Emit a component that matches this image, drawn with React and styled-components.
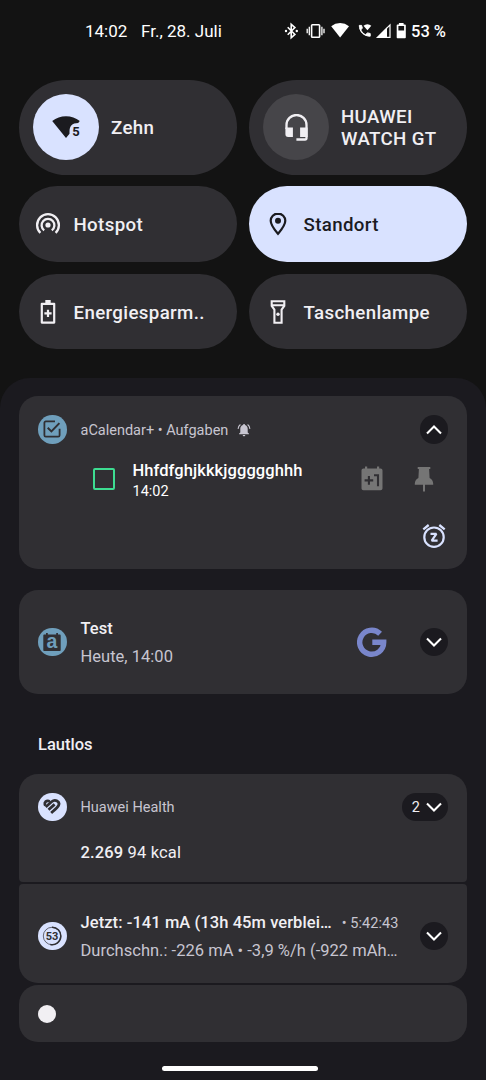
import React from "react";
import styled, { createGlobalStyle } from "styled-components";

const App = () => {
  return (
    <>
      <GlobalStyle />
      <Screen>
        <StatusBar>
          <StatusText $width={56}>14:02</StatusText>
          <StatusText $width={143}>Fr., 28. Juli</StatusText>
          <StatusIcons />
          <BatteryText>53 %</BatteryText>
        </StatusBar>

        <QuickSettings>
          <Tile $large>
            <TileCircle $active>
              <WifiFiveIcon />
            </TileCircle>
            <TileLabel>Zehn</TileLabel>
          </Tile>
          <Tile $large>
            <TileCircle>
              <HeadsetIcon />
            </TileCircle>
            <TileLabel>
              HUAWEI
              <br />
              WATCH GT
            </TileLabel>
          </Tile>
          <Tile>
            <TileIcon>
              <HotspotIcon />
            </TileIcon>
            <TileLabel>Hotspot</TileLabel>
          </Tile>
          <Tile $active>
            <TileIcon>
              <LocationIcon />
            </TileIcon>
            <TileLabel>Standort</TileLabel>
          </Tile>
          <Tile>
            <TileIcon>
              <BatterySaverIcon />
            </TileIcon>
            <TileLabel>Energiesparm..</TileLabel>
          </Tile>
          <Tile>
            <TileIcon>
              <FlashlightIcon />
            </TileIcon>
            <TileLabel>Taschenlampe</TileLabel>
          </Tile>
        </QuickSettings>

        <Shade>
          <Card $height={172.5}>
            <HeaderRow>
              <AppIcon $color="#6f9fbc">
                <TaskIcon />
              </AppIcon>
              <AppName>aCalendar+ • Aufgaben</AppName>
              <BellIcon />
              <Spacer />
              <Expand>
                <Chevron up />
              </Expand>
            </HeaderRow>
            <TaskRow>
              <Checkbox />
              <TaskText>
                <TaskTitle>Hhfdfghjkkkjggggghhh</TaskTitle>
                <TaskTime>14:02</TaskTime>
              </TaskText>
              <PlusOneIcon />
              <PinIcon />
            </TaskRow>
            <SnoozeRow>
              <SnoozeIcon />
            </SnoozeRow>
          </Card>

          <Card $height={104} $top={21} $center>
            <Row>
              <AppIcon $color="#6f9fbc">
                <CalendarIcon />
              </AppIcon>
              <Content>
                <Title>Test</Title>
                <Subtitle>Heute, 14:00</Subtitle>
              </Content>
              <GoogleIcon />
              <Expand>
                <Chevron />
              </Expand>
            </Row>
          </Card>

          <SectionTitle>Lautlos</SectionTitle>

          <Card $height={108} $radius="19px 19px 4px 4px">
            <HeaderRow>
              <AppIcon $color="#d9e2ff">
                <HealthIcon />
              </AppIcon>
              <AppName>Huawei Health</AppName>
              <Spacer />
              <Expand $wide>
                <Count>2</Count>
                <Chevron />
              </Expand>
            </HeaderRow>
            <HealthText>
              <b>2.269</b> 94 kcal
            </HealthText>
          </Card>

          <Card $height={99} $top={2} $radius="4px 4px 19px 19px" $center>
            <Row $shift>
              <AppIcon $color="#d9e2ff">
                <GaugeIcon />
              </AppIcon>
              <Content>
                <TitleLine>
                  <Title>Jetzt: -141 mA (13h 45m verblei…</Title>
                  <Elapsed>• 5:42:43</Elapsed>
                </TitleLine>
                <Subtitle>Durchschn.: -226 mA • -3,9 %/h (-922 mAh…</Subtitle>
              </Content>
              <Expand>
                <Chevron />
              </Expand>
            </Row>
          </Card>

          <Card $height={56.5} $top={2.3} $center>
            <Dot />
          </Card>

          <HomeBar />
        </Shade>
      </Screen>
    </>
  );
};

export default App;

/* ---------- icons ---------- */

const StatusIcons = () => (
  <svg width="127" height="20" viewBox="284 21 127 20" fill="none">
    {/* bluetooth */}
    <path d="M287.7 27.2l7.2 7.2-3.7 3.4V24.2l3.7 3.4-7.2 7.2" stroke="#fff" strokeWidth="1.6" />
    <circle cx="286" cy="31" r="1.2" fill="#fff" />
    <circle cx="296.8" cy="31" r="1.2" fill="#fff" />
    {/* vibrate */}
    <rect x="311.6" y="24.8" width="8" height="12.4" rx="0.8" stroke="#fff" strokeWidth="1.6" />
    <path d="M309.3 26.8v8.4M307.2 28.8v4.4M321.9 26.8v8.4M324 28.8v4.4" stroke="#fff" strokeWidth="1.3" />
    {/* wifi */}
    <path d="M340.1 37.4l8.9-11.2a14.2 14.2 0 0 0-17.8 0z" fill="#fff" />
    {/* wifi calling */}
    <path
      d="M359.3 25.400c0 6.200 4.600 10.800 10.900 10.800v-2.700l-2.600-.6-2.200 1.900a11 11 0 0 1-4.700-4.800l1.600-1.900-.7-2.700z"
      fill="#fff"
      stroke="#fff"
      strokeWidth="1"
    />
    <path d="M367.4 30.300l3.900-4.500a5.800 5.800 0 0 0-7.800 0z" fill="#fff" />
    {/* signal */}
    <path d="M390 24.900v12.500h-12.400z" stroke="#fff" strokeWidth="1.200" />
    <path d="M387 27.300V38h-10.800z" fill="#fff" />
    {/* battery */}
    <path
      d="M398.900 24.400v-1.300h4.700v1.300h1.400c.5 0 .8.3.8.8v12.200c0 .5-.3.800-.8.800h-7.500c-.5 0-.8-.3-.8-.800V25.200c0-.5.3-.8.8-.8zM398.400 26v4.600h5.700V26z"
      fill="#fff"
      fillRule="evenodd"
    />
  </svg>
);

const WifiFiveIcon = () => (
  <svg width="30" height="24" viewBox="0 0 30 24" fill="#1b1b1f">
    <path d="M1.200 6a22 22 0 0 1 27.600 0l-1.600 2c-6.200 0-8.700 3.300-8.700 8.700v2L15 23z" />
    <text x="21.200" y="20.800" fontSize="13" fontWeight="700" fontFamily="Roboto">5</text>
  </svg>
);

const HeadsetIcon = () => (
  <svg width="23" height="27" viewBox="0 0 23 27" fill="none">
    <path d="M1.500 15v-4a10 10 0 0 1 20 0v13c0 .9-.6 1.500-1.500 1.500h-8.600" stroke="#f1eff3" strokeWidth="2.300" />
    <path d="M.4 13.400h7.500v9.500H3.200A2.800 2.800 0 0 1 .4 20zM15.100 13.400h7.500v9.500h-7.500z" fill="#f1eff3" />
  </svg>
);

const HotspotIcon = () => (
  <svg width="26" height="26" viewBox="0 0 26 26" fill="none" stroke="#f1eff3" strokeWidth="2.300">
    <circle cx="13" cy="14" r="2.600" fill="#f1eff3" stroke="none" />
    <path d="M9.200 19.400a6.400 6.400 0 1 1 7.600 0M5.400 21.900a10.900 10.900 0 1 1 15.200 0" />
  </svg>
);

const LocationIcon = () => (
  <svg width="18" height="24" viewBox="0 0 18 24" fill="none">
    <path
      d="M9 1.600c-4.200 0-7.300 3.200-7.300 7.200 0 4.700 4.500 9.700 7.300 13 2.800-3.300 7.300-8.300 7.300-13 0-4-3.100-7.200-7.300-7.200z"
      stroke="#1b1b1f"
      strokeWidth="2.200"
    />
    <circle cx="9" cy="8.700" r="3" fill="#1b1b1f" />
  </svg>
);

const BatterySaverIcon = () => (
  <svg width="16" height="24" viewBox="0 0 16 24" fill="none" stroke="#f1eff3">
    <path d="M1.800 3.800h12.400v18.800H1.800z" strokeWidth="2.200" strokeLinejoin="round" />
    <path d="M5.300 1.500h5.400" strokeWidth="3" />
    <path d="M8 9.800v7.200M4.400 13.400h7.200" strokeWidth="2.200" />
  </svg>
);

const FlashlightIcon = () => (
  <svg width="16" height="24" viewBox="0 0 16 24" fill="none" stroke="#f1eff3" strokeWidth="2.100">
    <path d="M1.700 1.300h12.600v4.600l-2.700 3.800v13H4.400v-13L1.700 5.900zM1.700 5.300h12.600" />
    <circle cx="8" cy="14.200" r="1.700" fill="#f1eff3" stroke="none" />
  </svg>
);

const TaskIcon = () => (
  <svg width="18" height="18" viewBox="0 0 18 18" fill="none" stroke="#302f33" strokeWidth="1.800">
    <path d="M12 1.400H2.800c-.8 0-1.400.6-1.400 1.400v12.400c0 .8.600 1.400 1.400 1.400h12.400c.8 0 1.400-.6 1.400-1.400V8.800" />
    <path d="M4.700 7.800l3.700 3.600 8-8.300" strokeWidth="2" />
  </svg>
);

const CalendarIcon = () => (
  <svg width="20" height="20" viewBox="0 0 20 20" fill="#302f33" overflow="visible">
    <path
      fillRule="evenodd"
      d="M4 .900h1.800v1.600h8.400V.900H16v1.600h1.500c.8 0 1.200.5 1.200 1.200v14.200c0 .7-.4 1.200-1.200 1.200h-15c-.8 0-1.200-.5-1.200-1.200V3.700c0-.7.4-1.200 1.200-1.200H4z"
    />
    <text x="10" y="16.300" fontSize="19.500" fontWeight="700" fontFamily="Liberation Sans" textAnchor="middle" fill="#6f9fbc">a</text>
  </svg>
);

const HealthIcon = () => (
  <svg width="20" height="18" viewBox="0 0 20 18" fill="none" stroke="#302f33" strokeWidth="2.800">
    <path d="M2.900 6.700C2.200 4 4.400 2.400 6.800 3" strokeLinecap="round" />
    <path d="M3.700 9L9.600 3.800c3.500-3 8.900-.2 6.900 3.800-.8 1.600-3.600 4-7.300 7.400" />
    <path d="M6.500 11.800l6.100-5.400" />
  </svg>
);

const GaugeIcon = () => (
  <svg width="20" height="20" viewBox="0 0 20 20" fill="none">
    <circle cx="10" cy="10" r="8.700" stroke="#302f33" strokeWidth="0.700" />
    <path d="M10 1.300a8.700 8.700 0 1 1-1.700 17.200" stroke="#302f33" strokeWidth="1.500" />
    <text x="10" y="14" fontSize="11" fontWeight="700" fontFamily="Roboto" textAnchor="middle" fill="#302f33">53</text>
  </svg>
);

const BellSvg = ({ className }) => (
  <svg className={className} width="14" height="14" viewBox="0 0 14 14" fill="#c7c5d0">
    <path d="M7 1c.6 0 1 .4 1 .9C9.700 2.400 10.700 4 10.700 5.800v3.600l1.200 1.200v.7H2.100v-.7l1.200-1.200V5.800C3.300 4 4.300 2.400 6 1.900c0-.5.400-.9 1-.9zM5.700 12h2.600c0 .8-.6 1.300-1.300 1.300S5.700 12.800 5.700 12z" />
    <path d="M3.400 1.500C2 2.500 1.200 4 1.100 5.900M10.600 1.500c1.400 1 2.200 2.500 2.300 4.400" fill="none" stroke="#c7c5d0" strokeWidth="1.100" />
  </svg>
);

const PlusOneSvg = ({ className }) => (
  <svg className={className} width="22" height="25" viewBox="0 0 22 25" fill="#757575">
    <path d="M4 .500h2.200v2H16V.500h2.200v2h1.300c1.200 0 2 .8 2 2v17.700c0 1.200-.8 2-2 2h-17c-1.200 0-2-.8-2-2V4.500c0-1.200.8-2 2-2H4z" />
    <path d="M3.600 14.400h8.600M7.900 10v8.800M13 9.300h4V20.300" fill="none" stroke="#302f33" strokeWidth="2.100" />
  </svg>
);

const PinSvg = ({ className }) => (
  <svg className={className} width="20" height="26" viewBox="0 0 20 26" fill="#757575">
    <path d="M3.700.900h12.600v2h-1.200l.5 9.100c2.200 1.200 3.600 3.100 3.600 5.700v1.100h-8.200v6.800H9v-6.800H.8v-1.100C.8 15.100 2.200 13.200 4.400 12l.5-9.100H3.700z" />
  </svg>
);

const SnoozeIcon = () => (
  <svg width="24" height="24" viewBox="0 0 24 24" fill="none" stroke="#d9e2ff">
    <circle cx="12" cy="13.200" r="9.700" strokeWidth="2.200" />
    <path d="M1.300 5.300L6.700 1M22.700 5.300L17.300 1" strokeWidth="2.300" />
    <path d="M8.500 9.800h5.900L9.700 16.600h5.900" strokeWidth="2.200" strokeLinejoin="bevel" />
  </svg>
);

const GoogleSvg = ({ className }) => (
  <svg className={className} width="30" height="31" viewBox="0 0 30 31" fill="none">
    <path d="M23.100 6.700A12 12 0 1 0 26.700 15.300H15.300" stroke="#7986cb" strokeWidth="5.400" />
  </svg>
);

const Chevron = ({ up }) => (
  <svg width="16" height="10" viewBox="0 0 16 10" fill="none">
    <path d={up ? "M1 8.500l7-7 7 7" : "M1 1.500l7 7 7-7"} stroke="#fff" strokeWidth="2.100" />
  </svg>
);

/* ---------- styles ---------- */

const GlobalStyle = createGlobalStyle`
  * {
    box-sizing: border-box;
  }
  body {
    margin: 0;
    background: #131313;
    font-family: Roboto, "Liberation Sans", sans-serif;
  }
  svg {
    display: block;
    flex: none;
  }
`;

const Screen = styled.div`
  display: flex;
  flex-direction: column;
  width: 486px;
  height: 1080px;
  overflow: hidden;
  background: #131313;
  color: #f1eff3;
`;

const StatusBar = styled.div`
  display: flex;
  align-items: center;
  height: 62px;
  padding-left: 85px;
  flex: none;
`;

const StatusText = styled.span`
  width: ${({ $width }) => $width}px;
  font-size: 17px;
  color: #fff;
  white-space: nowrap;
`;

const BatteryText = styled.span`
  font-size: 16.5px;
  font-weight: 500;
  color: #fff;
  white-space: nowrap;
`;

const QuickSettings = styled.div`
  display: grid;
  grid-template-columns: 218px 218px;
  gap: 11.7px 12px;
  padding: 18px 19px 0;
  height: 315.5px;
  align-content: start;
  flex: none;
`;

const Tile = styled.div`
  display: flex;
  align-items: center;
  height: ${({ $large }) => ($large ? "94.7px" : "75.7px")};
  padding-left: ${({ $large }) => ($large ? "14px" : "14.5px")};
  border-radius: 48px;
  background: ${({ $active }) => ($active ? "#d9e2ff" : "#302f33")};
  color: ${({ $active }) => ($active ? "#1b1b1f" : "#f1eff3")};
`;

const TileCircle = styled.div`
  display: flex;
  align-items: center;
  justify-content: center;
  width: 66px;
  height: 66px;
  margin-right: 12px;
  border-radius: 50%;
  background: ${({ $active }) => ($active ? "#d9e2ff" : "#464549")};
`;

const TileIcon = styled.div`
  display: flex;
  justify-content: center;
  width: 28px;
  margin-right: 12px;
`;

const TileLabel = styled.span`
  padding-top: 2px;
  font-size: 18.7px;
  line-height: 22px;
  font-weight: 500;
  letter-spacing: 0.36px;
  white-space: nowrap;
`;

const Shade = styled.div`
  display: flex;
  flex-direction: column;
  flex: 1;
  padding: 18.8px 19px 0;
  border-radius: 30px 30px 0 0;
  background: #1b1a1f;
`;

const Card = styled.div`
  display: flex;
  flex-direction: column;
  justify-content: ${({ $center }) => ($center ? "center" : "flex-start")};
  flex: none;
  height: ${({ $height }) => $height}px;
  margin-top: ${({ $top }) => $top || 0}px;
  padding: 0 19px;
  border-radius: ${({ $radius }) => $radius || "19px"};
  background: #302f33;
`;

const HeaderRow = styled.div`
  display: flex;
  align-items: center;
  height: 66px;
`;

const Row = styled.div`
  display: flex;
  align-items: center;
  padding-top: ${({ $shift }) => ($shift ? "5px" : 0)};
`;

const AppIcon = styled.div`
  display: flex;
  align-items: center;
  justify-content: center;
  flex: none;
  width: 28.5px;
  height: 28.5px;
  margin-right: 14px;
  border-radius: 50%;
  background: ${({ $color }) => $color};
`;

const AppName = styled.span`
  padding-top: 2px;
  font-size: 14.5px;
  color: #c7c5d0;
  white-space: nowrap;
`;

const BellIcon = styled(BellSvg)`
  margin: 2px 0 0 8.5px;
`;

const Spacer = styled.div`
  flex: 1;
`;

const Expand = styled.div`
  display: flex;
  align-items: center;
  justify-content: ${({ $wide }) => ($wide ? "flex-end" : "center")};
  gap: 6px;
  flex: none;
  width: ${({ $wide }) => ($wide ? "46px" : "28.5px")};
  height: 28.5px;
  padding-top: 1px;
  padding-right: ${({ $wide }) => ($wide ? "6px" : 0)};
  border-radius: 15px;
  background: #1b1a1f;
`;

const Count = styled.span`
  font-size: 14.5px;
`;

const TaskRow = styled.div`
  display: flex;
  align-items: center;
  height: 33px;
  padding: 0 14px 0 55px;
`;

const Checkbox = styled.div`
  width: 22px;
  height: 22px;
  border: 2px solid #3ddc91;
  border-radius: 2px;
`;

const TaskText = styled.div`
  display: flex;
  flex-direction: column;
  flex: 1;
  margin-left: 17.5px;
  padding-top: 4px;
`;

const TaskTitle = styled.span`
  font-size: 16.5px;
  line-height: 21px;
  font-weight: 500;
  letter-spacing: 0.08px;
  color: #fff;
  white-space: nowrap;
`;

const TaskTime = styled.span`
  font-size: 14.5px;
  line-height: 21px;
  color: #fff;
`;

const PlusOneIcon = styled(PlusOneSvg)`
  margin-right: 31.5px;
`;

const PinIcon = styled(PinSvg)``;

const SnoozeRow = styled.div`
  display: flex;
  justify-content: flex-end;
  padding: 28.5px 2px 0 0;
`;

const Content = styled.div`
  display: flex;
  flex-direction: column;
  flex: 1;
  min-width: 0;
  padding-top: 2px;
`;

const TitleLine = styled.div`
  display: flex;
  align-items: center;
`;

const Title = styled.span`
  font-size: 16.5px;
  line-height: 28px;
  font-weight: 500;
  letter-spacing: 0.07px;
  white-space: nowrap;
`;

const Subtitle = styled.span`
  font-size: 16.5px;
  line-height: 28px;
  letter-spacing: 0.02px;
  color: #c7c5d0;
  white-space: nowrap;
`;

const Elapsed = styled.span`
  margin-left: 10px;
  padding-top: 1px;
  font-size: 14.5px;
  letter-spacing: 0.06px;
  color: #c7c5d0;
  white-space: nowrap;
`;

const GoogleIcon = styled(GoogleSvg)`
  margin: 1px 32.5px 0 0;
`;

const SectionTitle = styled.div`
  height: 80.2px;
  padding: 40px 0 0 19px;
  font-size: 16.5px;
  line-height: 22px;
  font-weight: 500;
`;

const HealthText = styled.div`
  padding: 2px 0 0 42.5px;
  font-size: 16.5px;
  line-height: 22px;
  letter-spacing: 0.15px;

  b {
    font-weight: 500;
  }
`;

const Dot = styled.div`
  width: 18px;
  height: 18px;
  border-radius: 50%;
  background: #f1eff3;
`;

const HomeBar = styled.div`
  width: 156px;
  height: 5px;
  margin: 24px 0 0 143px;
  border-radius: 3px;
  background: #fff;
`;
